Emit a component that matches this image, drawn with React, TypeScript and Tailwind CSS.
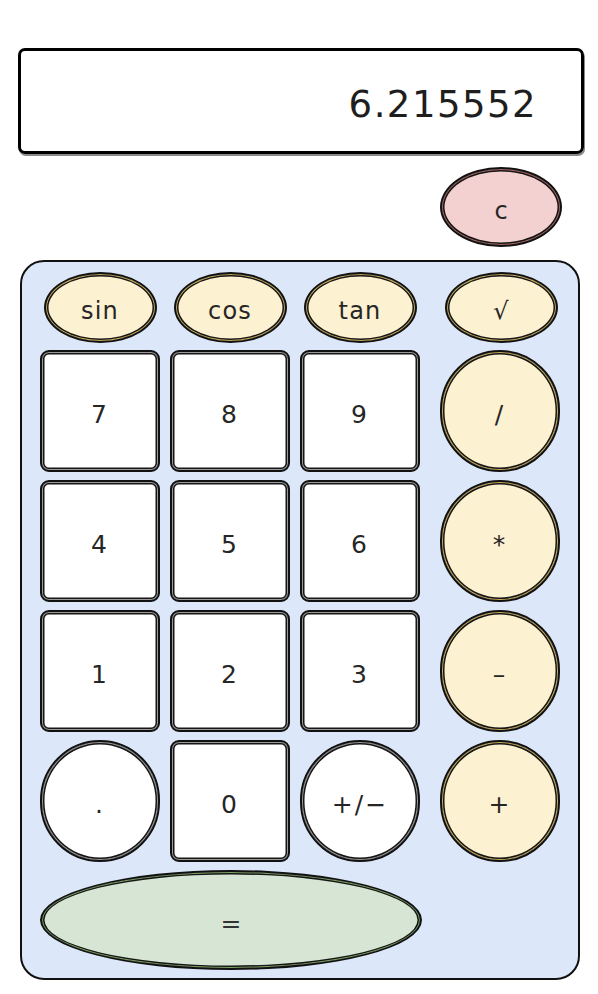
import React from 'react';

type Key = {
  label: string;
  shape: 'square' | 'round' | 'pill';
  tone: 'white' | 'yellow';
};

const rows: Key[][] = [
  [
    { label: '7', shape: 'square', tone: 'white' },
    { label: '8', shape: 'square', tone: 'white' },
    { label: '9', shape: 'square', tone: 'white' },
    { label: '/', shape: 'round', tone: 'yellow' },
  ],
  [
    { label: '4', shape: 'square', tone: 'white' },
    { label: '5', shape: 'square', tone: 'white' },
    { label: '6', shape: 'square', tone: 'white' },
    { label: '*', shape: 'round', tone: 'yellow' },
  ],
  [
    { label: '1', shape: 'square', tone: 'white' },
    { label: '2', shape: 'square', tone: 'white' },
    { label: '3', shape: 'square', tone: 'white' },
    { label: '–', shape: 'round', tone: 'yellow' },
  ],
  [
    { label: '.', shape: 'round', tone: 'white' },
    { label: '0', shape: 'square', tone: 'white' },
    { label: '+/−', shape: 'round', tone: 'white' },
    { label: '+', shape: 'round', tone: 'yellow' },
  ],
];

const funcs = ['sin', 'cos', 'tan', '√'];

const CalcKey = ({ k, last }: { k: Key; last: boolean }) => {
  const shape = k.shape === 'square' ? 'rounded-[9px]' : 'rounded-full';
  const tone =
    k.tone === 'yellow'
      ? 'bg-[#fcf1d1] shadow-[inset_0_0_0_1px_#c9ad5c,inset_0_0_0_2.5px_#161616]'
      : 'bg-white shadow-[inset_0_0_0_1px_#9a9a9a,inset_0_0_0_2.5px_#161616]';
  return (
    <button
      className={`h-[122px] w-[120px] border-2 border-[#111] ${shape} ${tone} ${last ? 'justify-self-end' : ''} flex items-center justify-center pt-[8px] text-[25px] tracking-[0.08em] text-[#262626]`}
    >
      {k.label}
    </button>
  );
};

export default function App() {
  return (
    <div className="min-h-[994px] w-[598px] bg-white font-['DejaVu_Sans',sans-serif]">
      <div className="pt-[48px] pl-[18px]">
        <div className="flex h-[106px] w-[566px] items-center justify-end rounded-[7px] border-[3px] border-black pr-[44px] pt-[8px] shadow-[1px_2px_0_#8a8a8a]">
          <span className="text-[37px] tracking-[0.04em] text-[#1e1e1e]">6.215552</span>
        </div>
      </div>

      <div className="flex justify-end pr-[36px] pt-[13px]">
        <button className="flex h-[80px] w-[122px] items-center justify-center rounded-[50%] border-2 border-[#111] bg-[#f2d1d0] pt-[8px] text-[24px] text-[#262626] shadow-[inset_0_0_0_1px_#b06a66,inset_0_0_0_2.5px_#161616]">
          c
        </button>
      </div>

      <div className="ml-[20px] mt-[13px] w-[560px] rounded-[24px] border-2 border-[#111] bg-[#dce7f9] px-[18px] pt-[10px] pb-[8px]">
        <div className="grid grid-cols-[120px_120px_120px_130px] gap-x-[10px]">
          {funcs.map((f, i) => (
            <div key={f} className={`flex ${i === 3 ? 'justify-end pr-[2px]' : 'justify-center'}`}>
              <button className="flex h-[71px] w-[113px] items-center justify-center rounded-[50%] border-2 border-[#111] bg-[#fcf1d1] pt-[7px] text-[24px] tracking-[0.05em] text-[#262626] shadow-[inset_0_0_0_1px_#c9ad5c,inset_0_0_0_2.5px_#161616]">
                {f}
              </button>
            </div>
          ))}
        </div>

        <div className="mt-[7px] grid grid-cols-[120px_120px_120px_130px] gap-x-[10px] gap-y-[8px]">
          {rows.flat().map((k, i) => (
            <CalcKey key={i} k={k} last={i % 4 === 3} />
          ))}
          <button className="col-span-3 flex h-[100px] w-[382px] items-center justify-center rounded-[50%] border-2 border-[#111] bg-[#d7e6d4] pt-[8px] text-[25px] text-[#333] shadow-[inset_0_0_0_1px_#7ea463,inset_0_0_0_2.5px_#161616]">
            =
          </button>
        </div>
      </div>
    </div>
  );
}
